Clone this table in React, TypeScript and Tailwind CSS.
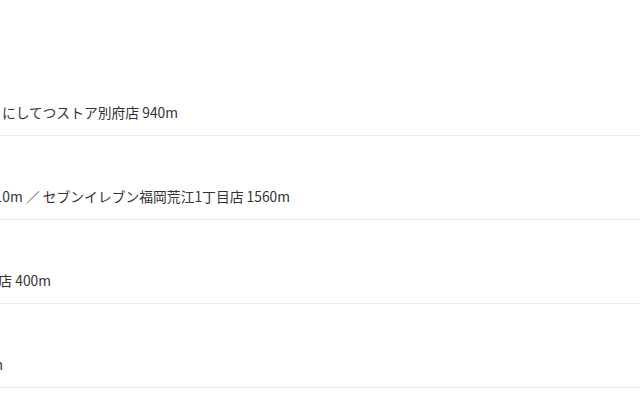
import React from "react";

const rows = [
  { text: "ファミリーマート別府北店 320m ／ にしてつストア別府店 940m", end: "w-[178px]" },
  { text: "ローソン福岡荒江店 210m ／ セブンイレブン福岡荒江1丁目店 1560m", end: "w-[290px]" },
  { text: "セブンイレブン別府店 400m", end: "w-[51px]" },
  { text: "ローソン別府店 650m", end: "w-[3px]" },
];

export default function App() {
  return (
    <div
      className="w-[640px] h-[400px] overflow-hidden bg-white text-[#333333]"
      style={{ fontFamily: '"Noto Sans CJK JP", "Noto Sans", sans-serif' }}
    >
      <div className="h-[52px]" />
      {rows.map((r, i) => (
        <div key={i} className="h-[84px] border-b border-[#ebebeb] pt-[50px]">
          <div className={`${r.end} flex justify-end whitespace-nowrap text-[13.8px] leading-5`}>
            <span className="shrink-0">{r.text}</span>
          </div>
        </div>
      ))}
    </div>
  );
}
